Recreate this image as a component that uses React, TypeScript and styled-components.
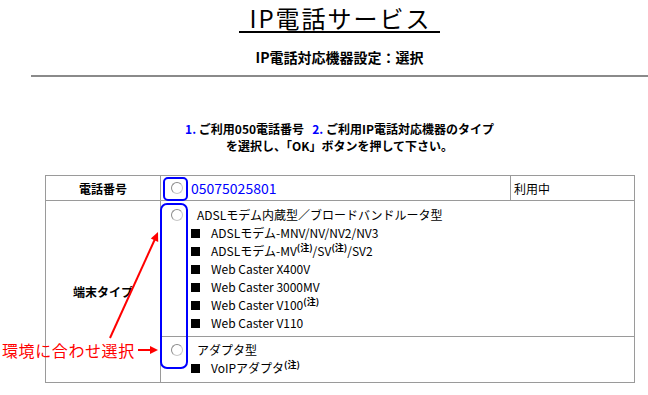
import styled, { createGlobalStyle } from "styled-components";

const GlobalStyle = createGlobalStyle`
  html, body {
    margin: 0;
    padding: 0;
    background: #ffffff;
  }
  body {
    font-family: "Noto Sans CJK JP", "Noto Sans", sans-serif;
    color: #000000;
  }
`;

type Item = { label: string; note?: boolean };

const builtInItems: Item[][] = [
    [{ label: "ADSLモデム-MNV/NV/NV2/NV3" }],
    [{ label: "ADSLモデム-MV", note: true }, { label: "/SV", note: true }, { label: "/SV2" }],
    [{ label: "Web Caster X400V" }],
    [{ label: "Web Caster 3000MV" }],
    [{ label: "Web Caster V100", note: true }],
    [{ label: "Web Caster V110" }],
];

const adapterItems: Item[][] = [[{ label: "VoIPアダプタ", note: true }]];

function ItemList({ items }: { items: Item[][] }) {
    return (
        <List>
            {items.map((parts, i) => (
                <ListItem key={i}>
                    <span>
                        {parts.map((p, j) => (
                            <span key={j}>
                                {p.label}
                                {p.note && <Note>(注)</Note>}
                            </span>
                        ))}
                    </span>
                </ListItem>
            ))}
        </List>
    );
}

export default function App() {
    return (
        <>
            <GlobalStyle />
            <Page>
                <Header>
                    <Title>IP電話サービス</Title>
                    <SubTitle>IP電話対応機器設定：選択</SubTitle>
                </Header>
                <Rule />
                <Guide>
                    <p>
                        <Num>1.</Num> ご利用050電話番号&nbsp;&nbsp; <Num>2.</Num> ご利用IP電話対応機器のタイプ
                    </p>
                    <p>を選択し、「OK」ボタンを押して下さい。</p>
                </Guide>

                <TableWrap>
                    <Table>
                        <colgroup>
                            <col style={{ width: 115 }} />
                            <col style={{ width: 350 }} />
                            <col style={{ width: 124 }} />
                        </colgroup>
                        <tbody>
                            <tr>
                                <LabelCell>電話番号</LabelCell>
                                <NumberCell>
                                    <Radio type="radio" name="tel" />
                                    <Phone>05075025801</Phone>
                                    <Highlight $small />
                                </NumberCell>
                                <StatusCell>利用中</StatusCell>
                            </tr>
                            <tr>
                                <LabelCell rowSpan={2}>端末タイプ</LabelCell>
                                <ChoiceCell colSpan={2} $top={5} $bottom={4}>
                                    <ChoiceHead>
                                        <Radio type="radio" name="device" />
                                        <span>ADSLモデム内蔵型／ブロードバンドルータ型</span>
                                    </ChoiceHead>
                                    <ItemList items={builtInItems} />
                                </ChoiceCell>
                            </tr>
                            <tr>
                                <ChoiceCell colSpan={2} $top={4} $bottom={5}>
                                    <ChoiceHead>
                                        <Radio type="radio" name="device" />
                                        <span>アダプタ型</span>
                                    </ChoiceHead>
                                    <ItemList items={adapterItems} />
                                </ChoiceCell>
                            </tr>
                        </tbody>
                    </Table>
                    <Highlight />
                </TableWrap>

                <Annotation>環境に合わせ選択</Annotation>
                <Arrows width="648" height="395" viewBox="0 0 648 395">
                    <line x1="138" y1="350" x2="151" y2="350" />
                    <polygon points="150,346 158,350 150,354" />
                    <line x1="110" y1="338" x2="155" y2="239" />
                    <polygon points="158,232 158.2,242 150.8,238.6" />
                </Arrows>
            </Page>
        </>
    );
}

const Page = styled.div`
  position: relative;
  width: 617px;
  height: 395px;
  padding-left: 31px;
  overflow: hidden;
`;

const Header = styled.div`
  display: flex;
  flex-direction: column;
  align-items: center;
  padding-top: 4px;
`;

const Title = styled.h1`
  margin: 0;
  padding: 0 8px 0 10px;
  font-size: 24px;
  font-weight: normal;
  letter-spacing: 2px;
  line-height: 27px;
  border-bottom: 2px solid #000;
`;

const SubTitle = styled.h2`
  margin: 15px 0 0;
  font-size: 14px;
  font-weight: bold;
  line-height: 18px;
`;

const Rule = styled.hr`
  margin: 9px 0 0;
  border: 0;
  border-top: 2px solid #8a8a8a;
`;

const Guide = styled.div`
  margin-top: 43px;
  text-align: center;
  font-size: 12px;
  font-weight: bold;
  line-height: 17px;

  p {
    margin: 0;
  }
`;

const Num = styled.span`
  color: #0000ff;
`;

const TableWrap = styled.div`
  position: relative;
  width: 589px;
  margin: 21px auto 0;
`;

const Table = styled.table`
  width: 100%;
  table-layout: fixed;
  border-collapse: collapse;
  font-size: 12px;

  td {
    border: 1px solid #9a9a9a;
    vertical-align: middle;
  }
`;

const LabelCell = styled.td`
  text-align: center;
  font-weight: bold;
`;

const NumberCell = styled.td`
  position: relative;
  height: 24px;
  padding: 0 0 0 10px;
  white-space: nowrap;
`;

const StatusCell = styled.td`
  padding: 0 3px;
`;

const Phone = styled.span`
  margin-left: 8px;
  font-size: 14px;
  color: #0000ff;
  vertical-align: middle;
`;

const ChoiceCell = styled.td<{ $top: number; $bottom: number }>`
  padding: ${({ $top }) => $top}px 0 ${({ $bottom }) => $bottom}px 10px;
  line-height: 18px;
`;

const ChoiceHead = styled.div`
  display: flex;
  align-items: center;
  gap: 14px;
`;

const Radio = styled.input`
  appearance: none;
  width: 12px;
  height: 12px;
  margin: 0;
  border-radius: 50%;
  border: 1px solid #8c8c8c;
  border-right-color: #c8c8c8;
  border-bottom-color: #c8c8c8;
  background: #ffffff;
  vertical-align: middle;
  box-sizing: border-box;
`;

const List = styled.ul`
  margin: 0;
  padding: 0 0 0 20px;
  list-style: none;
`;

const ListItem = styled.li`
  display: flex;
  align-items: center;
  gap: 11px;

  &::before {
    content: "";
    flex: none;
    width: 9px;
    height: 9px;
    background: #000;
  }
`;

const Note = styled.sup`
  font-size: 9px;
  font-weight: bold;
  line-height: 0;
`;

const Highlight = styled.div<{ $small?: boolean }>`
  position: absolute;
  pointer-events: none;
  box-sizing: border-box;
  border: 2.5px solid #0000ff;
  border-radius: ${({ $small }) => ($small ? "5px" : "7px")};
  left: ${({ $small }) => ($small ? "2px" : "115px")};
  top: ${({ $small }) => ($small ? "1px" : "28px")};
  width: ${({ $small }) => ($small ? "25px" : "28px")};
  height: ${({ $small }) => ($small ? "24px" : "166px")};
`;

const Annotation = styled.div`
  position: absolute;
  left: 2px;
  top: 340px;
  color: #ff0000;
  font-size: 16px;
  line-height: 20px;
  letter-spacing: 0.6px;
  white-space: nowrap;
`;

const Arrows = styled.svg`
  position: absolute;
  left: 0;
  top: 0;
  pointer-events: none;

  line {
    stroke: #ff0000;
    stroke-width: 2;
  }
  polygon {
    fill: #ff0000;
  }
`;
